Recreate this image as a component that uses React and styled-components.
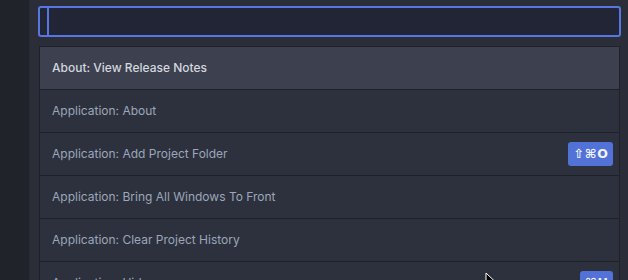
import React from 'react';
import styled, { createGlobalStyle } from 'styled-components';

const GlobalStyle = createGlobalStyle`
  html, body {
    margin: 0;
    padding: 0;
    background: #21232b;
    overflow: hidden;
  }
  body {
    font-family: "Inter", "Noto Sans", sans-serif;
  }
`;

const Screen = styled.div`
  position: relative;
  display: flex;
  width: 628px;
  height: 280px;
  overflow: hidden;
`;

const Sidebar = styled.div`
  width: 29px;
  flex: none;
  background: #21232b;
  border-right: 1px solid #262832;
`;

const Palette = styled.div`
  flex: 1;
  display: flex;
  flex-direction: column;
  gap: 9px;
  padding: 6px 7px 0 8px;
  background: #2b2e39;
`;

const SearchBox = styled.div`
  height: 27px;
  display: flex;
  align-items: center;
  padding-left: 7px;
  border: 2px solid #5677e0;
  border-radius: 3px;
  background: #222535;
`;

const Caret = styled.span`
  width: 2px;
  height: 27px;
  background: #5677e0;
`;

const List = styled.ul`
  list-style: none;
  margin: 0 1px;
  padding: 0;
  border: 1px solid #1f2129;
  border-bottom: none;
`;

const Row = styled.li`
  height: 42px;
  display: flex;
  align-items: center;
  justify-content: space-between;
  padding: 0 6px 1px 12px;
  box-sizing: border-box;
  height: 43px;
  border-bottom: 1px solid #1f2129;
  background: ${p => (p.$selected ? '#3c404f' : '#2d313e')};
  color: ${p => (p.$selected ? '#d3d7df' : '#9ca6b8')};
  font-size: 12px;
  font-weight: ${p => (p.$selected ? 500 : 400)};
`;

const Keys = styled.span`
  height: 24px;
  display: flex;
  align-items: center;
  padding: 0 4px 0 5px;
  border-radius: 3px;
  background: #5272d8;
  color: #f0f3fb;
  font-family: "DejaVu Sans", sans-serif;
  font-size: 12.5px;
  font-weight: bold;
  letter-spacing: 1px;
`;

const Pointer = styled.svg`
  position: absolute;
  left: 485px;
  top: 272px;
`;

const commands = [
  { label: 'About: View Release Notes', selected: true },
  { label: 'Application: About' },
  { label: 'Application: Add Project Folder', keys: '⇧⌘O' },
  { label: 'Application: Bring All Windows To Front' },
  { label: 'Application: Clear Project History' },
  { label: 'Application: Hide', keys: '⌘H' },
];

export default function App() {
  return (
    <Screen>
      <GlobalStyle />
      <Sidebar />
      <Palette>
        <SearchBox>
          <Caret />
        </SearchBox>
        <List>
          {commands.map(c => (
            <Row key={c.label} $selected={c.selected}>
              <span>{c.label}</span>
              {c.keys && <Keys>{c.keys}</Keys>}
            </Row>
          ))}
        </List>
      </Palette>
      <Pointer width="12" height="18" viewBox="0 0 12 18">
        <path d="M1 1 L1 15 L4.5 11.5 L7 17 L9 16 L6.5 10.5 L11 10.5 Z" fill="#000" stroke="#fff" strokeWidth="1" />
      </Pointer>
    </Screen>
  );
}
